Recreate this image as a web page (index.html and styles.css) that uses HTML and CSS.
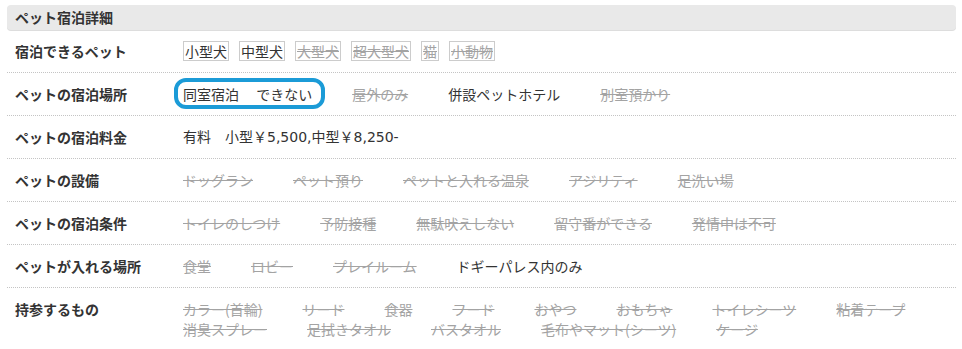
FILE: index.html
```html
<!DOCTYPE html>
<html lang="ja">
<head>
<meta charset="utf-8">
<title>ペット宿泊詳細</title>
<link rel="stylesheet" href="styles.css">
</head>
<body>
<section class="pet-detail">
  <h2 class="head">ペット宿泊詳細</h2>
  <div class="rows">
    <div class="row">
      <div class="label">宿泊できるペット</div>
      <ul class="tags">
        <li class="tag">小型犬</li>
        <li class="tag">中型犬</li>
        <li class="tag off">大型犬</li>
        <li class="tag off">超大型犬</li>
        <li class="tag off">猫</li>
        <li class="tag off">小動物</li>
      </ul>
    </div>
    <div class="row">
      <div class="label">ペットの宿泊場所</div>
      <ul class="items">
        <li class="mark">同室宿泊　 できない</li>
        <li class="off">屋外のみ</li>
        <li>併設ペットホテル</li>
        <li class="off">別室預かり</li>
      </ul>
    </div>
    <div class="row">
      <div class="label">ペットの宿泊料金</div>
      <div class="value">有料　小型￥5,500,中型￥8,250-</div>
    </div>
    <div class="row">
      <div class="label">ペットの設備</div>
      <ul class="items">
        <li class="off">ドッグラン</li>
        <li class="off">ペット預り</li>
        <li class="off">ペットと入れる温泉</li>
        <li class="off">アジリティ</li>
        <li class="off">足洗い場</li>
      </ul>
    </div>
    <div class="row">
      <div class="label">ペットの宿泊条件</div>
      <ul class="items">
        <li class="off">トイレのしつけ</li>
        <li class="off">予防接種</li>
        <li class="off">無駄吠えしない</li>
        <li class="off">留守番ができる</li>
        <li class="off">発情中は不可</li>
      </ul>
    </div>
    <div class="row">
      <div class="label">ペットが入れる場所</div>
      <ul class="items">
        <li class="off">食堂</li>
        <li class="off">ロビー</li>
        <li class="off">プレイルーム</li>
        <li>ドギーパレス内のみ</li>
      </ul>
    </div>
    <div class="row last">
      <div class="label">持参するもの</div>
      <ul class="items">
        <li class="off">カラー(首輪)</li>
        <li class="off">リード</li>
        <li class="off">食器</li>
        <li class="off">フード</li>
        <li class="off">おやつ</li>
        <li class="off">おもちゃ</li>
        <li class="off">トイレシーツ</li>
        <li class="off">粘着テープ</li>
        <li class="off">消臭スプレー</li>
        <li class="off">足拭きタオル</li>
        <li class="off">バスタオル</li>
        <li class="off">毛布やマット(シーツ)</li>
        <li class="off">ケージ</li>
      </ul>
    </div>
  </div>
</section>
</body>
</html>
```
FILE: styles.css
```css
html, body {
  background: #ffffff;
}
body {
  margin: 5px 6px 0 7px;
  font-family: "Noto Sans CJK JP", "Noto Sans", sans-serif;
  color: #333333;
  font-size: 14px;
}
.pet-detail {
  width: 949px;
}
.head {
  margin: 0;
  height: 25px;
  line-height: 25px;
  padding-left: 8px;
  font-size: 14px;
  font-weight: bold;
  color: #333333;
  background: #e9e9e9;
  border-radius: 4px;
  box-shadow: 0 1px 0 #dddddd;
}
.row {
  display: grid;
  grid-template-columns: 176px 1fr;
  padding: 11px 0;
  line-height: 20px;
  border-bottom: 1px dotted #c4c4c4;
}
.row.last {
  border-bottom: none;
}
.label {
  padding-left: 8px;
  font-weight: bold;
  color: #333333;
}
.value {
  font-family: "DejaVu Sans", "Noto Sans CJK JP", sans-serif;
}
.tags, .items {
  list-style: none;
  margin: 0;
  padding: 0;
  display: flex;
  flex-wrap: wrap;
}
.tags {
  gap: 10px;
}
.tag {
  border: 1px solid #cccccc;
  padding: 0 1px;
  line-height: 18px;
}
.items {
  column-gap: 40px;
  row-gap: 0;
}
.off {
  color: #a3a3a3;
  text-decoration: line-through;
}
.mark {
  position: relative;
}
.mark::after {
  content: "";
  position: absolute;
  left: -9px;
  right: -13px;
  top: -6px;
  bottom: -5px;
  border: 4px solid #1b9bd7;
  border-radius: 12px;
}
```
